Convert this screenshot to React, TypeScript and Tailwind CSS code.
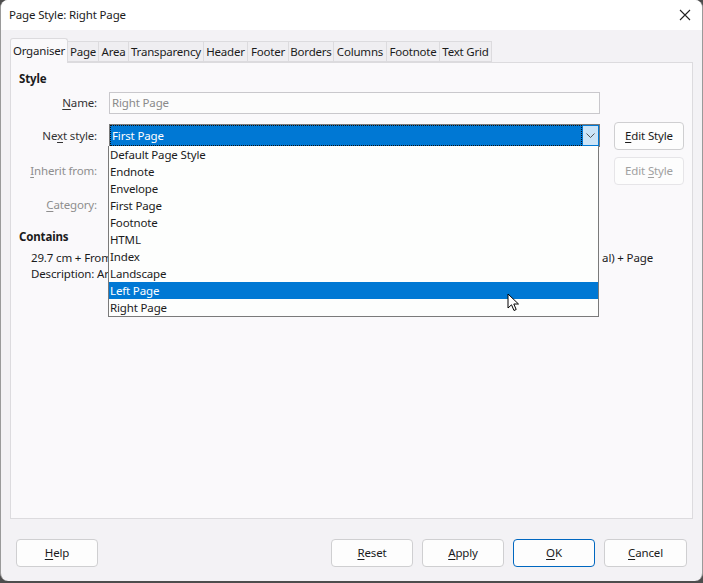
import React from 'react';

const tabs = [
  { label: 'Organiser', w: 'w-[58px]' },
  { label: 'Page', w: 'w-[31px]' },
  { label: 'Area', w: 'w-[30px]' },
  { label: 'Transparency', w: 'w-[75px]' },
  { label: 'Header', w: 'w-[44px]' },
  { label: 'Footer', w: 'w-[41px]' },
  { label: 'Borders', w: 'w-[45px]' },
  { label: 'Columns', w: 'w-[53px]' },
  { label: 'Footnote', w: 'w-[53px]' },
  { label: 'Text Grid', w: 'w-[52px]' },
];

const styles = [
  'Default Page Style',
  'Endnote',
  'Envelope',
  'First Page',
  'Footnote',
  'HTML',
  'Index',
  'Landscape',
  'Left Page',
  'Right Page',
];

// Label with one underlined mnemonic letter
function Mnemonic({ text, at }: { text: string; at: number }) {
  return (
    <>
      {text.slice(0, at)}
      <span className="underline underline-offset-2">{text[at]}</span>
      {text.slice(at + 1)}
    </>
  );
}

function DialogButton({ children, primary = false, disabled = false, className = '' }: { children: React.ReactNode; primary?: boolean; disabled?: boolean; className?: string }) {
  return (
    <button
      className={`h-[28px] rounded-[4px] border bg-[#fdfdfd] ${
        primary ? 'border-[#0067c0]' : disabled ? 'border-[#e6e5e8] text-[#a0a0a0]' : 'border-[#cfcfd1]'
      } ${className}`}
    >
      {children}
    </button>
  );
}

export default function App() {
  const hovered = 'Left Page';

  return (
    <div className="w-[703px] h-[583px] bg-[#4d4d4d] text-[#1b1b1b] font-['Noto_Sans',sans-serif] text-[11.5px] tracking-[-0.15px] leading-none select-none">
      <div className="relative w-[703px] h-[581px] bg-[#f3f2f5] rounded-[8px] border-l border-r border-[#9a9a9a] overflow-hidden flex flex-col">
        {/* Title bar */}
        <div className="h-[30px] flex-none bg-white flex items-center justify-between pl-[8px] pr-[10px]">
          <span>Page Style: Right Page</span>
          <svg width="12" height="12" viewBox="0 0 12 12" className="mr-[1px]">
            <path d="M1 1 L11 11 M11 1 L1 11" stroke="#222" strokeWidth="1.1" fill="none" />
          </svg>
        </div>

        {/* Tabs */}
        <div className="flex items-end h-[32px] pl-[9px] tracking-[-0.2px]">
          {tabs.map((t, i) =>
            i === 0 ? (
              <div
                key={t.label}
                className={`${t.w} h-[25px] flex-none flex items-center justify-center bg-[#faf9fb] border border-b-0 border-[#dcdbde] rounded-t-[3px] -mb-px relative z-10`}
              >
                {t.label}
              </div>
            ) : (
              <div
                key={t.label}
                className={`${t.w} h-[21px] flex-none flex items-center justify-center bg-[#efeef1] border border-l-0 border-[#dcdbde]`}
              >
                {t.label}
              </div>
            )
          )}
        </div>

        {/* Tab page */}
        <div className="relative mx-[9px] w-[683px] h-[457px] bg-[#faf9fb] border border-[#dcdbde]">
          <div className="pt-[10px] pl-[8px] font-bold">Style</div>

          <div className="mt-[7px] flex flex-col">
            {/* Name */}
            <div className="flex items-center h-[22px]">
              <span className="w-[86px] text-right text-[#333]">
                <Mnemonic text="Name:" at={0} />
              </span>
              <div className="ml-[12px] w-[491px] h-[22px] border border-[#c9c8cc] bg-[#fcfcfc] flex items-center pl-[2px] text-[#8a8a8a]">
                Right Page
              </div>
            </div>

            {/* Next style */}
            <div className="mt-[9px] flex items-center h-[26px] relative">
              <span className="w-[86px] text-right text-[#333]">
                <Mnemonic text="Next style:" at={2} />
              </span>
              <div className="ml-[12px] w-[491px] h-[23px] border border-[#7a7a7a] bg-[#0078d4] flex items-center">
                <div className="flex-1 h-full border border-dotted border-[#111] flex items-center pl-[1px] text-white">
                  First Page
                </div>
                <div className="w-[17px] h-full bg-[#cce4f7] border border-[#0078d4] flex items-center justify-center">
                  <svg width="9" height="5" viewBox="0 0 9 5">
                    <path d="M0.5 0.5 L4.5 4.5 L8.5 0.5" stroke="#555" strokeWidth="1" fill="none" />
                  </svg>
                </div>
              </div>
              <DialogButton className="ml-[14px] w-[70px] h-[26px]">
                <Mnemonic text="Edit Style" at={0} />
              </DialogButton>
            </div>

            {/* Inherit from */}
            <div className="mt-[9px] flex items-center h-[27px]">
              <span className="w-[86px] text-right text-[#8e8e8e]">
                <Mnemonic text="Inherit from:" at={0} />
              </span>
              <div className="ml-[12px] w-[491px]" />
              <DialogButton disabled className="ml-[14px] w-[70px] h-[27px]">
                <Mnemonic text="Edit Style" at={5} />
              </DialogButton>
            </div>

            {/* Category */}
            <div className="mt-[7px] flex items-center h-[26px]">
              <span className="w-[86px] text-right text-[#8e8e8e]">
                <Mnemonic text="Category:" at={0} />
              </span>
            </div>
          </div>

          <div className="mt-[13px] pl-[8px] font-bold">Contains</div>
          {/* the middle of these lines sits under the open list */}
          <div className="mt-[10px] pl-[20px] w-[642px] flex justify-between whitespace-nowrap">
            <span>29.7 cm + From</span>
            <span>al) + Page</span>
          </div>
          <div className="mt-[4px] pl-[20px] whitespace-nowrap">Description: Ar</div>

          {/* Open dropdown list */}
          <div className="absolute left-[97px] top-[83px] w-[491px] h-[171px] bg-[#fdfefd] border border-[#7a7a7a] border-t-0 z-20">
            {styles.map((s) => (
              <div
                key={s}
                className={`h-[17px] flex items-center pl-[1px] ${s === hovered ? 'bg-[#0078d4] text-white' : ''}`}
              >
                {s}
              </div>
            ))}
          </div>

          {/* Mouse pointer */}
          <svg className="absolute left-[496px] top-[230px] z-30" width="14" height="20" viewBox="0 0 14 20">
            <path
              d="M1 1 L1 15 L4.5 11.8 L7 17.5 L9.2 16.5 L6.8 11 L11.5 11 Z"
              fill="#fff"
              stroke="#000"
              strokeWidth="1"
              strokeLinejoin="round"
            />
          </svg>
        </div>

        {/* Bottom buttons */}
        <div className="mt-[20px] flex items-center px-[15px]">
          <DialogButton className="w-[82px]">
            <Mnemonic text="Help" at={0} />
          </DialogButton>
          <div className="flex-1" />
          <div className="flex gap-[9px]">
            <DialogButton className="w-[82px]">
              <Mnemonic text="Reset" at={0} />
            </DialogButton>
            <DialogButton className="w-[82px]">
              <Mnemonic text="Apply" at={0} />
            </DialogButton>
            <DialogButton primary className="w-[82px]">
              <Mnemonic text="OK" at={0} />
            </DialogButton>
            <DialogButton className="w-[83px]">
              <Mnemonic text="Cancel" at={0} />
            </DialogButton>
          </div>
        </div>
      </div>
    </div>
  );
}
